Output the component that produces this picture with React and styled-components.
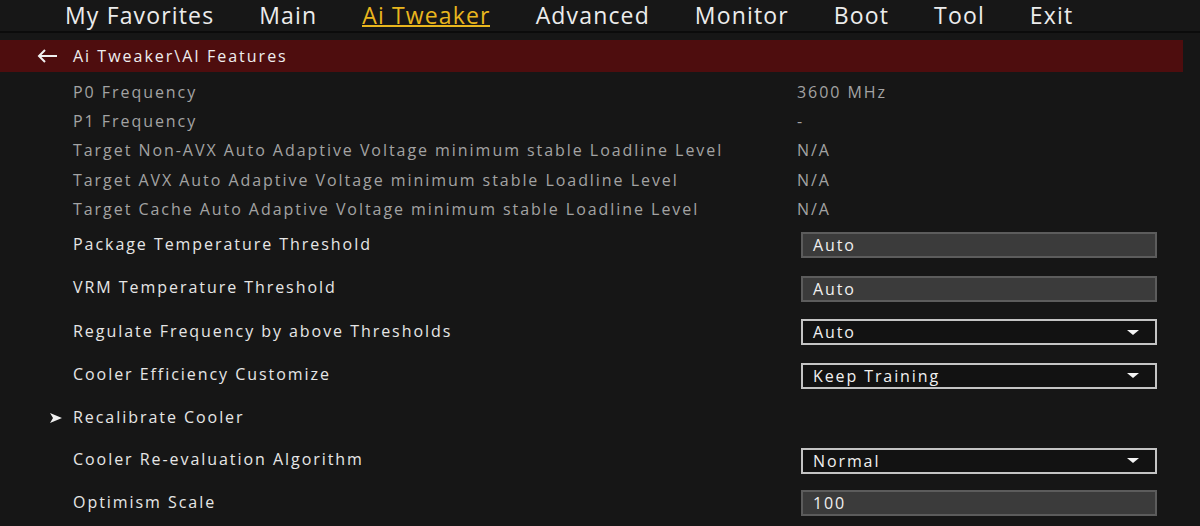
import React from "react";
import styled, { createGlobalStyle } from "styled-components";

const Global = createGlobalStyle`
  html, body { margin: 0; padding: 0; background: #161616; }
  body { font-family: "Open Sans", "DejaVu Sans", sans-serif; }
  * { box-sizing: border-box; }
`;

const Page = styled.div`
  width: 1200px;
  height: 526px;
  background: #161616;
  overflow: hidden;
  display: flex;
  flex-direction: column;
`;

const MenuBar = styled.nav`
  flex: 0 0 33px;
  height: 33px;
  background: #171717;
  border-bottom: 2px solid #0b0b0b;
  display: flex;
  align-items: flex-start;
  padding-left: 65px;
`;

const MenuItem = styled.div`
  font-size: 23px;
  line-height: 31px;
  letter-spacing: 1.15px;
  color: ${(p) => (p.$active ? "#e9b61e" : "#ececec")};
  margin-right: 45px;
  position: relative;
  white-space: nowrap;
  &::after {
    content: "";
    display: ${(p) => (p.$active ? "block" : "none")};
    position: absolute;
    left: 0;
    right: 1px;
    top: 25px;
    height: 2px;
    background: #e9b61e;
  }
`;

const Spacer = styled.div`
  flex: 0 0 7px;
`;

const Breadcrumb = styled.div`
  flex: 0 0 32px;
  height: 32px;
  width: 1183px;
  background: #4e0d0e;
  display: flex;
  align-items: center;
  padding-left: 37px;
  color: #eeeeee;
  font-size: 16px;
  letter-spacing: 2px;
  gap: 15px;
`;

const List = styled.div`
  display: flex;
  flex-direction: column;
  padding-top: ${(p) => p.$pad || 0}px;
`;

const InfoRow = styled.div`
  flex: 0 0 29.3px;
  height: 29.3px;
  display: grid;
  grid-template-columns: 724px 1fr;
  align-items: center;
  color: #a3a3a3;
  font-size: 16px;
  letter-spacing: 1.95px;
  padding-left: 73px;
  white-space: nowrap;
`;

const SettingRow = styled.div`
  flex: 0 0 ${(p) => p.$h || 43.5}px;
  height: ${(p) => p.$h || 43.5}px;
  display: flex;
  align-items: center;
  padding-left: 73px;
  position: relative;
`;

const Label = styled.div`
  flex: 1;
  color: #e6e6e6;
  font-size: 16px;
  letter-spacing: 1.95px;
  margin-top: -3px;
`;

const Bullet = styled.svg`
  position: absolute;
  left: 50px;
  top: 50%;
  margin-top: -5px;
`;

const Field = styled.div`
  width: 356px;
  height: 26px;
  margin-right: 43px;
  display: flex;
  align-items: center;
  justify-content: space-between;
  padding: 0 16px 0 10px;
  font-size: 16px;
  letter-spacing: 1.9px;
  color: #f0f0f0;
  background: ${(p) => (p.$select ? "#121212" : "#3b3b3b")};
  border: 2px solid ${(p) => (p.$select ? "#c4c4c4" : "#5c5c5c")};
`;

const Caret = styled.span`
  width: 0;
  height: 0;
  border-left: 6px solid transparent;
  border-right: 6px solid transparent;
  border-top: 5px solid #f4f4f4;
`;

const menu = [
  ["My Favorites"],
  ["Main"],
  ["Ai Tweaker", true],
  ["Advanced"],
  ["Monitor"],
  ["Boot"],
  ["Tool"],
  ["Exit"],
];

const info = [
  ["P0 Frequency", "3600 MHz"],
  ["P1 Frequency", "-"],
  ["Target Non-AVX Auto Adaptive Voltage minimum stable Loadline Level", "N/A"],
  ["Target AVX Auto Adaptive Voltage minimum stable Loadline Level", "N/A"],
  ["Target Cache Auto Adaptive Voltage minimum stable Loadline Level", "N/A"],
];

export default function App() {
  return (
    <Page>
      <Global />
      <MenuBar>
        {menu.map(([t, a]) => (
          <MenuItem key={t} $active={a}>
            {t}
          </MenuItem>
        ))}
      </MenuBar>
      <Spacer />
      <Breadcrumb>
        <svg width="21" height="14" viewBox="0 0 21 14">
          <path d="M20 7H2M8 1L2 7l6 6" fill="none" stroke="#f0f0f0" strokeWidth="2" />
        </svg>
        <span>Ai Tweaker\AI Features</span>
      </Breadcrumb>
      <List $pad={5}>
        {info.map(([l, v]) => (
          <InfoRow key={l}>
            <span>{l}</span>
            <span>{v}</span>
          </InfoRow>
        ))}
      </List>
      <List>
        <SettingRow>
          <Label>Package Temperature Threshold</Label>
          <Field>Auto</Field>
        </SettingRow>
        <SettingRow>
          <Label>VRM Temperature Threshold</Label>
          <Field>Auto</Field>
        </SettingRow>
        <SettingRow>
          <Label>Regulate Frequency by above Thresholds</Label>
          <Field $select>
            Auto
            <Caret />
          </Field>
        </SettingRow>
        <SettingRow>
          <Label>Cooler Efficiency Customize</Label>
          <Field $select>
            Keep Training
            <Caret />
          </Field>
        </SettingRow>
        <SettingRow $h={42}>
          <Bullet width="12" height="10" viewBox="0 0 12 10">
            <path d="M0 0L12 5L0 10L3 5Z" fill="#f0f0f0" />
          </Bullet>
          <Label>Recalibrate Cooler</Label>
        </SettingRow>
        <SettingRow $h={42.5}>
          <Label>Cooler Re-evaluation Algorithm</Label>
          <Field $select>
            Normal
            <Caret />
          </Field>
        </SettingRow>
        <SettingRow $h={42.5}>
          <Label>Optimism Scale</Label>
          <Field>100</Field>
        </SettingRow>
      </List>
    </Page>
  );
}
